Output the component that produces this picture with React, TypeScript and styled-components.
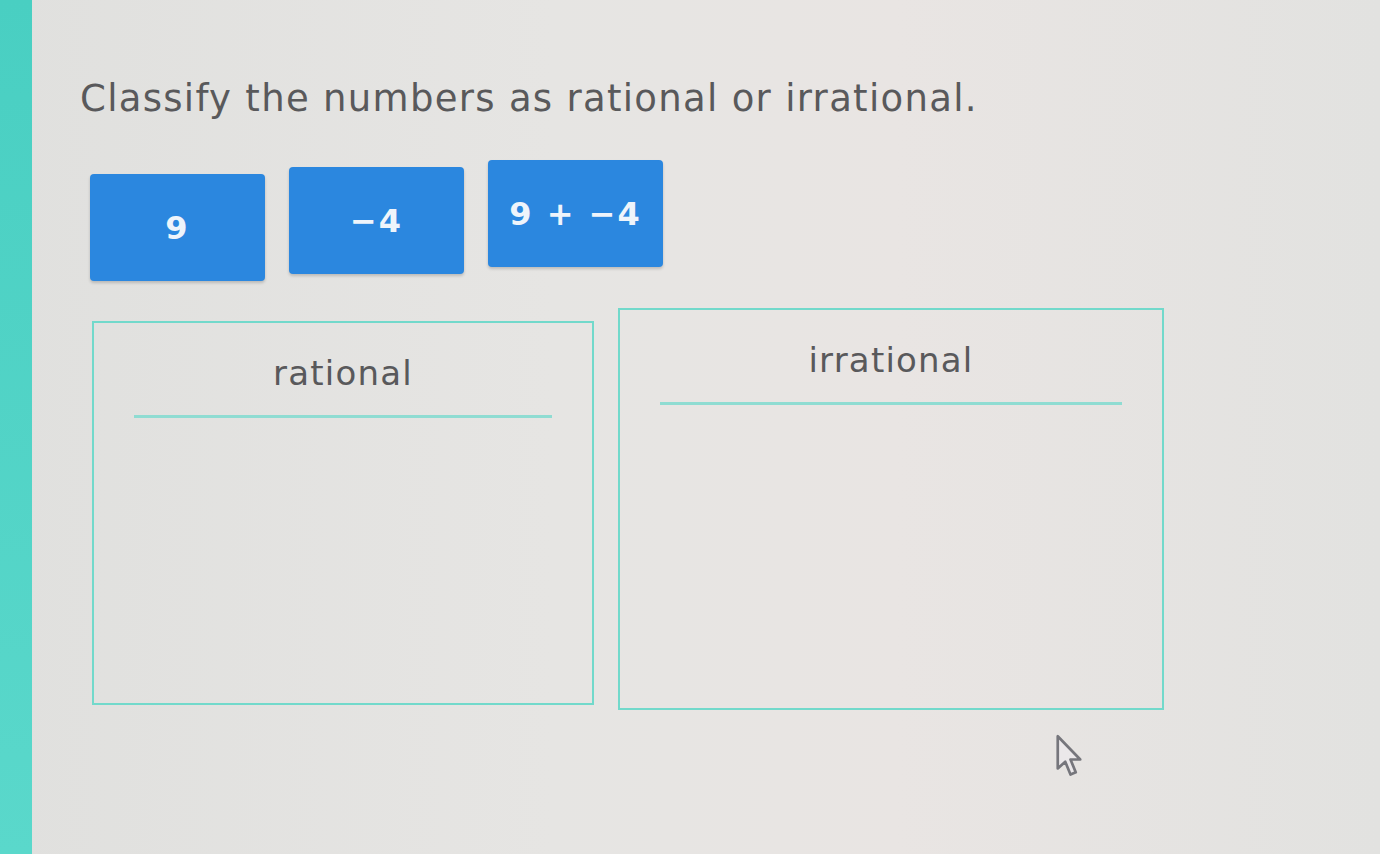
import styled, { createGlobalStyle } from "styled-components";

const GlobalStyle = createGlobalStyle`
  html, body {
    margin: 0;
    padding: 0;
    background: #e3e3e1;
  }
  #root {
    min-height: 100vh;
  }
`;

const tiles = ["9", "\u22124", "9 + \u22124"];

export default function App() {
  return (
    <>
      <GlobalStyle />
      <Page>
        <Stripe />
        <Content>
          <Prompt>Classify the numbers as rational or irrational.</Prompt>
          <TileRow>
            {tiles.map((t, i) => (
              <Tile key={i} $lift={i * 7}>
                {t}
              </Tile>
            ))}
          </TileRow>
          <Bins>
            <Bin $width={502} $height={384}>
              <BinTitle>rational</BinTitle>
              <BinRule />
            </Bin>
            <Bin $width={546} $height={402} $lift={13}>
              <BinTitle>irrational</BinTitle>
              <BinRule />
            </Bin>
          </Bins>
        </Content>
        <Cursor viewBox="0 0 20 30" width="30" height="45">
          <path
            d="M2.5 1.5 L2.5 23 L7.5 18.5 L11 27 L14.5 25.5 L11 17 L17.5 17 Z"
            fill="#ebe8ea"
            stroke="#76767c"
            strokeWidth="1.8"
            strokeLinejoin="round"
          />
        </Cursor>
      </Page>
    </>
  );
}

const Page = styled.div`
  position: relative;
  display: flex;
  width: 1380px;
  height: 854px;
  overflow: hidden;
  background: linear-gradient(
    to right,
    #e0e0de 0%,
    #e6e5e3 40%,
    #e9e5e3 65%,
    #e2e2e0 100%
  );
`;

const Stripe = styled.div`
  width: 32px;
  flex-shrink: 0;
  background: linear-gradient(to bottom, #49cfc2, #5ad8cb);
`;

const Content = styled.div`
  display: flex;
  flex-direction: column;
  padding: 78px 0 0 48px;
`;

const Prompt = styled.h1`
  margin: 0;
  font-family: "DejaVu Sans", Verdana, sans-serif;
  font-weight: 400;
  font-size: 37px;
  line-height: 42px;
  letter-spacing: 1.3px;
  color: #59595b;
`;

const TileRow = styled.div`
  display: flex;
  gap: 24px;
  margin: 40px 0 0 10px;
  align-items: flex-start;
`;

const Tile = styled.div<{ $lift: number }>`
  width: 175px;
  height: 107px;
  margin-top: ${(p) => 14 - p.$lift}px;
  display: flex;
  align-items: center;
  justify-content: center;
  background: #2b87df;
  border-radius: 4px;
  box-shadow: 0 2px 3px rgba(0, 0, 0, 0.18);
  color: #eef4fb;
  font-family: "DejaVu Sans", Verdana, sans-serif;
  font-weight: 700;
  font-size: 32px;
  letter-spacing: 2px;
`;

const Bins = styled.div`
  display: flex;
  gap: 24px;
  margin: 26px 0 0 12px;
  align-items: flex-start;
`;

const Bin = styled.div<{ $width: number; $height: number; $lift?: number }>`
  width: ${(p) => p.$width}px;
  height: ${(p) => p.$height}px;
  margin-top: ${(p) => 14 - (p.$lift ?? 0)}px;
  box-sizing: border-box;
  border: 2px solid #72d9cb;
  display: flex;
  flex-direction: column;
  align-items: center;
  padding: 30px 40px 0;
`;

const BinTitle = styled.div`
  font-family: "DejaVu Sans", Verdana, sans-serif;
  font-size: 34px;
  line-height: 40px;
  color: #59595b;
  letter-spacing: 1.2px;
  margin-bottom: 22px;
`;

const BinRule = styled.div`
  align-self: stretch;
  height: 3px;
  background: #8fdcd2;
`;

const Cursor = styled.svg`
  position: absolute;
  left: 1054px;
  top: 734px;
`;
